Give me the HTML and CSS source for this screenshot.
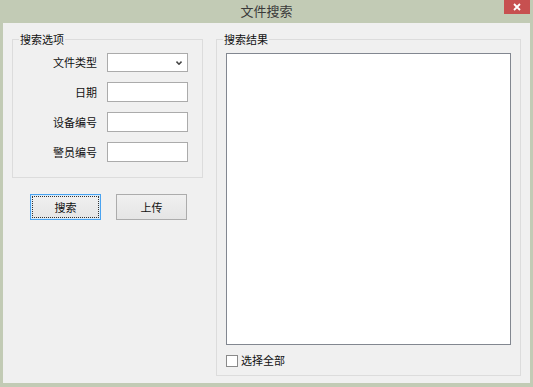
FILE: index.html
```html
<!DOCTYPE html>
<html>
<head>
  <meta charset="utf-8">
  <title>文件搜索</title>
  <link rel="stylesheet" href="styles.css">
</head>
<body>
  <div class="window">
    <div class="titlebar">
      <span class="title">文件搜索</span>
      <button class="close-btn" aria-label="关闭">
        <svg width="8" height="8" viewBox="0 0 8 8"><path d="M1 1L7 7M7 1L1 7" stroke="#fff" stroke-width="1.8"/></svg>
      </button>
    </div>

    <div class="client">
      <div class="left-pane">
        <fieldset class="group options">
          <legend>搜索选项</legend>
          <div class="field-row">
            <label>文件类型</label>
            <div class="combo">
              <svg width="6" height="4" viewBox="0 0 6 4"><path d="M0.5 0.6L3 3.2L5.5 0.6" fill="none" stroke="#444" stroke-width="1.5"/></svg>
            </div>
          </div>
          <div class="field-row">
            <label for="date-input">日期</label>
            <input type="text" id="date-input" class="textbox">
          </div>
          <div class="field-row">
            <label for="device-input">设备编号</label>
            <input type="text" id="device-input" class="textbox">
          </div>
          <div class="field-row">
            <label for="officer-input">警员编号</label>
            <input type="text" id="officer-input" class="textbox">
          </div>
        </fieldset>

        <div class="actions">
          <button class="btn btn-default">搜索</button>
          <button class="btn">上传</button>
        </div>
      </div>

      <fieldset class="group results">
        <legend>搜索结果</legend>
        <div class="result-list"></div>
        <label class="check-all"><input type="checkbox">选择全部</label>
      </fieldset>
    </div>
  </div>
</body>
</html>
```

FILE: styles.css
```css
body {
  margin: 0;
  font-family: "Noto Sans CJK SC", "Liberation Sans", sans-serif;
  font-size: 11px;
  color: #111;
}
.window {
  width: 533px;
  height: 387px;
  background: #c2cbb5;
  display: flex;
  flex-direction: column;
}
.titlebar {
  height: 23px;
  flex: none;
  display: grid;
  grid-template-columns: 1fr auto 1fr;
}
.title {
  grid-column: 2;
  font-size: 13px;
  line-height: 21px;
  color: #3a3a3a;
}
.close-btn {
  grid-column: 3;
  justify-self: end;
  align-self: start;
  width: 26px;
  height: 14px;
  margin-right: 3px;
  padding: 0;
  border: none;
  background: #c75050;
  display: flex;
  align-items: center;
  justify-content: center;
}
.client {
  flex: 1;
  margin: 0 3px 4px;
  background: #f0f0f0;
  display: flex;
  align-items: flex-start;
  gap: 13px;
  padding: 10px 0 0 9px;
}
.group {
  margin: 0;
  padding: 7px 0 0 0;
  border: 1px solid #dcdcdc;
  box-sizing: border-box;
}
.group legend {
  margin-left: 6px;
  padding: 0 1px;
  line-height: 13px;
  font-size: 11px;
}
.options {
  width: 191px;
  height: 145px;
  display: flex;
  flex-direction: column;
  gap: 10px;
}
.field-row {
  display: flex;
  align-items: center;
  gap: 10px;
}
.field-row label {
  width: 84px;
  text-align: right;
  line-height: 13px;
}
.combo,
.textbox {
  width: 81px;
  box-sizing: border-box;
  background: #fff;
  border: 1px solid #ababab;
  margin: 0;
}
.combo {
  height: 19px;
  display: flex;
  align-items: center;
  justify-content: flex-end;
  padding-right: 5px;
}
.textbox {
  height: 20px;
  padding: 0 3px;
  font: inherit;
}
.actions {
  display: flex;
  gap: 15px;
  margin-top: 16px;
  padding-left: 18px;
}
.btn {
  width: 71px;
  height: 26px;
  padding: 0;
  border: 1px solid #acacac;
  background: linear-gradient(#f0f0f0, #e5e5e5);
  font: inherit;
  color: #111;
}
.btn-default {
  border-color: #4aa3f0;
  box-shadow: inset 0 0 0 1px #d6ebfb;
  outline: 1px dotted #333;
  outline-offset: -3px;
}
.results {
  width: 305px;
  height: 343px;
}
.result-list {
  height: 292px;
  margin: 0 9px;
  background: #fff;
  border: 1px solid #828790;
  box-sizing: border-box;
}
.check-all {
  display: flex;
  align-items: center;
  gap: 3px;
  margin: 9px 0 0 9px;
  line-height: 13px;
}
.check-all input {
  appearance: none;
  margin: 0;
  width: 12px;
  height: 12px;
  border: 1px solid #8a8a8a;
  background: #fff;
}
```
